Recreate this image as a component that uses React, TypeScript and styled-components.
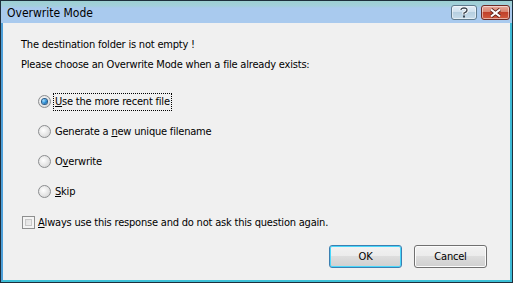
import React from "react";
import styled, { createGlobalStyle } from "styled-components";

const GlobalStyle = createGlobalStyle`
  html, body {
    margin: 0;
    padding: 0;
    background: #f0f0f0;
  }
  body {
    font-family: "DejaVu Sans Condensed", "DejaVu Sans", sans-serif;
    font-size: 11px;
    letter-spacing: -0.2px;
    color: #000000;
  }
`;

const Window = styled.div`
  width: 513px;
  height: 283px;
  box-sizing: border-box;
  display: flex;
  flex-direction: column;
  border: 1px solid #1e2f3c;
  background: #f0f0f0;
  overflow: hidden;
`;

const TitleBar = styled.div`
  height: 22px;
  flex: none;
  display: flex;
  align-items: center;
  justify-content: space-between;
  padding: 0 2px 0 6px;
  background: linear-gradient(to bottom, #9dd0d2 0px, #a3cfdc 5px, #a9caee 7px, #a9caee 100%);
`;

const Title = styled.span`
  font-size: 12px;
  letter-spacing: 0;
  padding-top: 2px;
`;

const Caption = styled.div`
  display: flex;
  gap: 4px;
  align-self: flex-start;
  margin-top: 4px;
`;

const CaptionButton = styled.div<{ $close?: boolean }>`
  width: ${(p) => (p.$close ? 29 : 26)}px;
  height: 15px;
  box-sizing: border-box;
  border: 1px solid ${(p) => (p.$close ? "#6d2a24" : "#5f7a8c")};
  border-radius: 3px;
  display: flex;
  align-items: center;
  justify-content: center;
  background: ${(p) =>
    p.$close
      ? "linear-gradient(to bottom, #e8a99c 0%, #d8846f 45%, #c1402a 50%, #d15a3e 100%)"
      : "linear-gradient(to bottom, #e3eef7 0%, #cfe0ee 45%, #b6cfe0 50%, #c7dceb 100%)"};
  box-shadow: inset 0 0 0 1px rgba(255, 255, 255, 0.5);
`;

const Body = styled.div`
  flex: 1;
  display: flex;
  flex-direction: column;
  border-left: 2px solid #4e9fd8;
  border-right: 2px solid #3dbad6;
  border-bottom: 2px solid #3cc0d6;
  padding: 0 0 0 18px;
`;

const Message = styled.div`
  margin-top: 15px;
  line-height: 13px;
`;

const Prompt = styled.div`
  margin-top: 7px;
  line-height: 13px;
`;

const Options = styled.div`
  display: flex;
  flex-direction: column;
  gap: 17px;
  margin-top: 24px;
  padding-left: 17px;
`;

const Option = styled.label`
  display: flex;
  align-items: center;
  gap: 3px;
  height: 13px;
`;

const Radio = styled.span<{ $checked?: boolean }>`
  width: 13px;
  height: 13px;
  box-sizing: border-box;
  border-radius: 50%;
  border: 1px solid #8b8d8f;
  background: radial-gradient(circle at 40% 40%, #ffffff 0%, #e2e2e2 60%, #cfcfcf 100%);
  display: flex;
  align-items: center;
  justify-content: center;

  &::after {
    content: "";
    display: ${(p) => (p.$checked ? "block" : "none")};
    width: 5px;
    height: 5px;
    border-radius: 50%;
    background: radial-gradient(circle at 35% 35%, #a8e0ff 0%, #2c8fd6 50%, #0d4f8c 100%);
    box-shadow: 0 0 0 1px #2a5a86;
  }
`;

const Label = styled.span<{ $focused?: boolean }>`
  padding: 1px 1px 2px 1px;
  outline: ${(p) => (p.$focused ? "1px dotted #000000" : "none")};
  outline-offset: 0;
`;

const Key = styled.u`
  text-decoration: underline;
`;

const CheckRow = styled.label`
  display: flex;
  align-items: center;
  gap: 3px;
  margin-top: 18px;
  padding-left: 1px;
  height: 13px;
`;

const Check = styled.span`
  width: 13px;
  height: 13px;
  box-sizing: border-box;
  border: 1px solid #8e8f8f;
  background: linear-gradient(135deg, #dcdcdc 0%, #f4f4f4 100%);
  box-shadow: inset 0 0 0 2px #f4f4f4, inset 0 0 0 3px #c8c8c8;
`;

const Footer = styled.div`
  display: flex;
  justify-content: flex-end;
  gap: 12px;
  margin-top: 16px;
  padding-right: 23px;
`;

const Button = styled.button<{ $default?: boolean }>`
  width: 73px;
  height: 23px;
  box-sizing: border-box;
  font-family: "DejaVu Sans Condensed", "DejaVu Sans", sans-serif;
  font-size: 11px;
  letter-spacing: -0.2px;
  color: #000000;
  border-radius: 3px;
  border: 1px solid ${(p) => (p.$default ? "#3c7fb1" : "#707070")};
  background: linear-gradient(to bottom, #f2f2f2 0%, #ebebeb 49%, #dddddd 50%, #cfcfcf 100%);
  box-shadow: ${(p) =>
    p.$default ? "inset 0 0 0 1px #48d7fb" : "inset 0 0 0 1px #fcfcfc"};
  padding: 0;
`;

function RadioOption({
  checked,
  focused,
  children,
}: {
  checked?: boolean;
  focused?: boolean;
  children: React.ReactNode;
}) {
  return (
    <Option>
      <Radio $checked={checked} />
      <Label $focused={focused}>{children}</Label>
    </Option>
  );
}

export default function App() {
  return (
    <>
      <GlobalStyle />
      <Window>
        <TitleBar>
          <Title>Overwrite Mode</Title>
          <Caption>
            <CaptionButton>
              <svg width="10" height="11" viewBox="0 0 10 11">
                <path
                  d="M2 3 Q2 1 5 1 Q8 1 8 3 Q8 5 5 6 L5 7.5"
                  fill="none"
                  stroke="#ffffff"
                  strokeWidth="3"
                />
                <path
                  d="M2 3 Q2 1 5 1 Q8 1 8 3 Q8 5 5 6 L5 7.5"
                  fill="none"
                  stroke="#3d4650"
                  strokeWidth="1.3"
                />
                <rect x="4" y="8.5" width="2" height="2" fill="#3d4650" />
              </svg>
            </CaptionButton>
            <CaptionButton $close>
              <svg width="13" height="10" viewBox="0 0 13 10">
                <path d="M2 1.5 L11 8.5 M11 1.5 L2 8.5" stroke="#5a2018" strokeWidth="3.6" />
                <path d="M2 1.5 L11 8.5 M11 1.5 L2 8.5" stroke="#ffffff" strokeWidth="2.2" />
              </svg>
            </CaptionButton>
          </Caption>
        </TitleBar>
        <Body>
          <Message>The destination folder is not empty !</Message>
          <Prompt>Please choose an Overwrite Mode when a file already exists:</Prompt>
          <Options>
            <RadioOption checked focused>
              <Key>U</Key>se the more recent file
            </RadioOption>
            <RadioOption>
              Generate a <Key>n</Key>ew unique filename
            </RadioOption>
            <RadioOption>
              O<Key>v</Key>erwrite
            </RadioOption>
            <RadioOption>
              <Key>S</Key>kip
            </RadioOption>
          </Options>
          <CheckRow>
            <Check />
            <span>
              <Key>A</Key>lways use this response and do not ask this question again.
            </span>
          </CheckRow>
          <Footer>
            <Button $default>OK</Button>
            <Button>Cancel</Button>
          </Footer>
        </Body>
      </Window>
    </>
  );
}
